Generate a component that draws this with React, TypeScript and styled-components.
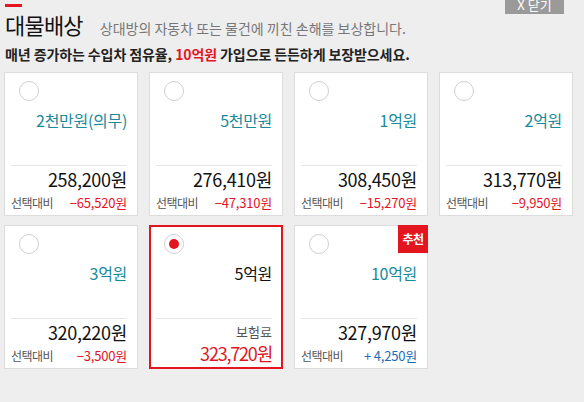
import React from "react";
import styled, { createGlobalStyle } from "styled-components";

const Global = createGlobalStyle`
  html, body { margin: 0; padding: 0; background: #eeeeee; }
  body { font-family: "Noto Sans CJK KR", "Noto Sans", sans-serif; }
  * { box-sizing: border-box; }
`;

const Page = styled.div`
  position: relative;
  width: 584px;
  height: 402px;
  padding: 4px 0 0 4px;
  overflow: hidden;
`;

const RedBar = styled.div`
  width: 17px;
  height: 3px;
  margin-left: 1px;
  background: #e3161f;
`;

const TitleRow = styled.div`
  display: flex;
  align-items: baseline;
  gap: 17px;
  margin: 3px 0 0 1px;
  height: 29px;
`;

const Title = styled.h1`
  margin: 0;
  font-size: 22px;
  font-weight: 400;
  color: #111;
  line-height: 29px;
  letter-spacing: -0.8px;
`;

const Sub = styled.span`
  font-size: 14px;
  color: #777;
  letter-spacing: 0;
`;

const Lead = styled.p`
  margin: 6px 0 0 1px;
  font-size: 14px;
  font-weight: 700;
  color: #222;
  line-height: 19px;
  letter-spacing: -0.1px;
`;

const Hl = styled.span`
  color: #e3161f;
`;

const Close = styled.button`
  position: absolute;
  top: -10px;
  left: 505px;
  width: 59px;
  height: 24px;
  border: 0;
  padding: 5px 0 0;
  background: #9a9a9a;
  color: #fff;
  font-family: inherit;
  font-size: 13px;
  line-height: 18px;
`;

const Grid = styled.div`
  display: grid;
  grid-template-columns: repeat(4, 134px);
  grid-auto-rows: 144px;
  column-gap: 11px;
  row-gap: 9px;
  margin-top: 8px;
`;

const Card = styled.div<{ $sel?: boolean }>`
  position: relative;
  display: flex;
  flex-direction: column;
  background: #fff;
  border: ${(p) => (p.$sel ? "2px solid #e3161f" : "1px solid #dcdcdc")};
  padding: ${(p) => (p.$sel ? "7px 9px 0 5px" : "8px 10px 0 6px")};
`;

const Radio = styled.span<{ $sel?: boolean }>`
  position: relative;
  width: 20px;
  height: 20px;
  margin-left: 8px;
  border-radius: 50%;
  border: 1px solid #cfcfcf;
  background: #fff;
  display: flex;
  align-items: center;
  justify-content: center;
  &::after {
    content: "";
    display: ${(p) => (p.$sel ? "block" : "none")};
    width: 10px;
    height: 10px;
    border-radius: 50%;
    background: #e3161f;
  }
`;

const Amount = styled.div<{ $sel?: boolean }>`
  margin-top: 8px;
  height: 22px;
  text-align: right;
  font-size: 16px;
  line-height: 22px;
  color: ${(p) => (p.$sel ? "#111" : "#178a9c")};
  letter-spacing: -0.3px;
`;

const Divider = styled.div`
  margin-top: 34px;
  height: 1px;
  background: #e6e6e6;
`;

const Price = styled.div`
  margin-top: 1px;
  text-align: right;
  font-size: 18px;
  line-height: 24px;
  color: #111;
  letter-spacing: -0.3px;
`;

const CompareRow = styled.div`
  display: flex;
  justify-content: space-between;
  align-items: baseline;
  margin-top: 2px;
  line-height: 20px;
`;

const CompareLabel = styled.span`
  font-size: 12px;
  color: #555;
  letter-spacing: -0.5px;
`;

const Diff = styled.span<{ $plus?: boolean }>`
  font-size: 13px;
  color: ${(p) => (p.$plus ? "#1f6cb5" : "#e3161f")};
  letter-spacing: -0.2px;
`;

const PremLabel = styled.div`
  margin-top: 4px;
  text-align: right;
  font-size: 13px;
  line-height: 18px;
  color: #555;
`;

const PremPrice = styled.div`
  margin-top: 0;
  text-align: right;
  font-size: 18px;
  line-height: 24px;
  color: #e3161f;
  letter-spacing: -1.2px;
`;

const Badge = styled.span`
  position: absolute;
  top: -1px;
  right: -1px;
  width: 30px;
  height: 28px;
  background: #e3161f;
  color: #fff;
  font-size: 12px;
  font-weight: 700;
  line-height: 28px;
  text-align: center;
  letter-spacing: -0.5px;
`;

type Opt = { amount: string; price: string; diff?: string; plus?: boolean; sel?: boolean; badge?: boolean };

const opts: Opt[] = [
  { amount: "2천만원(의무)", price: "258,200원", diff: "−65,520원" },
  { amount: "5천만원", price: "276,410원", diff: "−47,310원" },
  { amount: "1억원", price: "308,450원", diff: "−15,270원" },
  { amount: "2억원", price: "313,770원", diff: "−9,950원" },
  { amount: "3억원", price: "320,220원", diff: "−3,500원" },
  { amount: "5억원", price: "323,720원", sel: true },
  { amount: "10억원", price: "327,970원", diff: "+ 4,250원", plus: true, badge: true },
];

export default function App() {
  return (
    <>
      <Global />
      <Page>
        <RedBar />
        <TitleRow>
          <Title>대물배상</Title>
          <Sub>상대방의 자동차 또는 물건에 끼친 손해를 보상합니다.</Sub>
        </TitleRow>
        <Lead>
          매년 증가하는 수입차 점유율, <Hl>10억원</Hl> 가입으로 든든하게 보장받으세요.
        </Lead>
        <Close>X 닫기</Close>
        <Grid>
          {opts.map((o) => (
            <Card key={o.amount} $sel={o.sel}>
              {o.badge && <Badge>추천</Badge>}
              <Radio $sel={o.sel} />
              <Amount $sel={o.sel}>{o.amount}</Amount>
              <Divider />
              {o.sel ? (
                <>
                  <PremLabel>보험료</PremLabel>
                  <PremPrice>{o.price}</PremPrice>
                </>
              ) : (
                <>
                  <Price>{o.price}</Price>
                  <CompareRow>
                    <CompareLabel>선택대비</CompareLabel>
                    <Diff $plus={o.plus}>{o.diff}</Diff>
                  </CompareRow>
                </>
              )}
            </Card>
          ))}
        </Grid>
      </Page>
    </>
  );
}
